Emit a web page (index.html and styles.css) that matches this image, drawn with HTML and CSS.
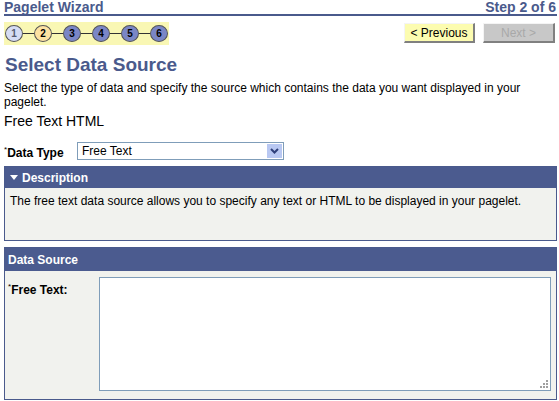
FILE: index.html
```html
<!DOCTYPE html>
<html>
<head>
<meta charset="utf-8">
<link rel="stylesheet" href="styles.css">
</head>
<body>
<div class="page">
  <div class="titlebar">
    <span>Pagelet Wizard</span>
    <span>Step 2 of 6</span>
  </div>
  <div class="navrow">
    <div class="steps">
      <span class="step done">1</span><span class="line"></span>
      <span class="step current">2</span><span class="line"></span>
      <span class="step todo">3</span><span class="line"></span>
      <span class="step todo">4</span><span class="line"></span>
      <span class="step todo">5</span><span class="line"></span>
      <span class="step todo">6</span>
    </div>
    <div class="buttons">
      <span class="btn prev">&lt; Previous</span>
      <span class="btn next">Next &gt;</span>
    </div>
  </div>
  <h1 class="heading">Select Data Source</h1>
  <p class="intro">Select the type of data and specify the source which contains the data you want displayed in your pagelet.</p>
  <div class="subtitle">Free Text HTML</div>
  <div class="typerow">
    <label class="lbl"><span class="req">*</span>Data Type</label>
    <div class="select">
      <span class="selval">Free Text</span>
      <span class="selarrow">
        <svg width="9" height="6" viewBox="0 0 9 6"><path d="M1 1 L4.5 4.5 L8 1" fill="none" stroke="#2f3f7a" stroke-width="2"/></svg>
      </span>
    </div>
  </div>
  <div class="box desc">
    <div class="boxhead"><span class="tri"></span>Description</div>
    <div class="boxbody descbody">The free text data source allows you to specify any text or HTML to be displayed in your pagelet.</div>
  </div>
  <div class="box source">
    <div class="boxhead">Data Source</div>
    <div class="boxbody srcbody">
      <label class="lbl ftlabel"><span class="req">*</span>Free Text:</label>
      <div class="tawrap">
        <textarea class="ta"></textarea>
        <svg class="grip" width="9" height="9" viewBox="0 0 9 9"><g fill="#a0a0a0"><rect x="7" y="1" width="2" height="2"/><rect x="4" y="4" width="2" height="2"/><rect x="7" y="4" width="2" height="2"/><rect x="1" y="7" width="2" height="2"/><rect x="4" y="7" width="2" height="2"/><rect x="7" y="7" width="2" height="2"/></g></svg>
      </div>
    </div>
  </div>
</div>
</body>
</html>
```

FILE: styles.css
```css
html, body {
  margin: 0;
  padding: 0;
  background: #ffffff;
}
body {
  font-family: "Liberation Sans", Arial, sans-serif;
  font-size: 12px;
  color: #000;
}
.page {
  padding: 0 2px 0 4px;
}
.titlebar {
  display: flex;
  justify-content: space-between;
  align-items: flex-start;
  height: 14px;
  border-bottom: 2px solid #4a5a8c;
  color: #4a5a8c;
  font-weight: bold;
  font-size: 14px;
  line-height: 14px;
  padding-right: 1px;
}
.navrow {
  display: flex;
  justify-content: space-between;
  align-items: flex-start;
  margin-top: 6px;
}
.steps {
  display: flex;
  align-items: center;
  background: #f9f7b4;
  height: 23px;
  width: 164px;
  padding-left: 1px;
}
.step {
  box-sizing: border-box;
  width: 18px;
  height: 17px;
  border-radius: 50%;
  border: 1px solid #555;
  display: flex;
  align-items: center;
  justify-content: center;
  font-size: 10px;
  font-weight: bold;
  color: #000;
}
.step.done {
  background: #d5dcf4;
  color: #555a70;
}
.step.current {
  background: #fde2a2;
}
.step.todo {
  background: #7a86c6;
}
.line {
  width: 11px;
  height: 1px;
  background: #333;
}
.buttons {
  display: flex;
  gap: 8px;
  margin-top: 1px;
  padding-right: 2px;
}
.btn {
  box-sizing: border-box;
  height: 20px;
  display: flex;
  align-items: center;
  justify-content: center;
  font-size: 12px;
  border-style: solid;
  border-width: 1px 2px 2px 1px;
  border-color: #f4f4f4 #808080 #808080 #f4f4f4;
}
.btn.prev {
  width: 71px;
  background: #fcfcb0;
  color: #000;
}
.btn.next {
  width: 72px;
  background: #c8c8c8;
  color: #a8a8a8;
}
.heading {
  margin: 8px 0 0 1px;
  font-size: 19px;
  line-height: 24px;
  font-weight: bold;
  color: #4a5a8c;
}
.intro {
  margin: 4px 0 0 0;
  line-height: 14px;
  padding-right: 20px;
}
.subtitle {
  font-size: 14px;
  line-height: 16px;
  margin-top: 4px;
}
.typerow {
  display: flex;
  align-items: center;
  margin-top: 13px;
  height: 18px;
}
.lbl {
  font-weight: bold;
  font-size: 12px;
}
.req {
  font-size: 8px;
  font-weight: normal;
  vertical-align: top;
  position: relative;
  top: -1px;
}
.typerow .lbl {
  width: 73px;
  padding-top: 3px;
}
.select {
  box-sizing: border-box;
  width: 207px;
  height: 18px;
  border: 1px solid #7f9db9;
  display: flex;
  align-items: center;
  justify-content: space-between;
  background: #fff;
}
.selval {
  padding-left: 4px;
}
.selarrow {
  width: 15px;
  height: 14px;
  margin-right: 1px;
  background: #b9c8f2;
  display: flex;
  align-items: center;
  justify-content: center;
}
.box {
  border: 1px solid #4a5a8c;
  background: #f1f2ee;
}
.desc {
  margin-top: 6px;
}
.source {
  margin-top: 6px;
}
.boxhead {
  background: #4b5b8f;
  color: #fff;
  font-weight: bold;
  font-size: 12px;
  height: 21px;
  display: flex;
  align-items: center;
  padding-left: 4px;
}
.source .boxhead {
  height: 23px;
  padding-left: 3px;
}
.tri {
  width: 0;
  height: 0;
  border-left: 4px solid transparent;
  border-right: 4px solid transparent;
  border-top: 5px solid #fff;
  margin: 0 4px 0 1px;
}
.descbody {
  height: 52px;
  padding: 6px 5px 0;
  box-sizing: border-box;
}
.srcbody {
  display: flex;
  height: 128px;
  box-sizing: border-box;
  padding: 6px 5px 0 3px;
}
.ftlabel {
  width: 91px;
  padding-top: 6px;
}
.tawrap {
  position: relative;
  flex: 1;
  height: 114px;
}
.ta {
  box-sizing: border-box;
  width: 100%;
  height: 100%;
  border: 1px solid #7f9db9;
  resize: none;
  margin: 0;
  display: block;
  background: #fff;
}
.grip {
  position: absolute;
  right: 3px;
  bottom: 3px;
}
```
